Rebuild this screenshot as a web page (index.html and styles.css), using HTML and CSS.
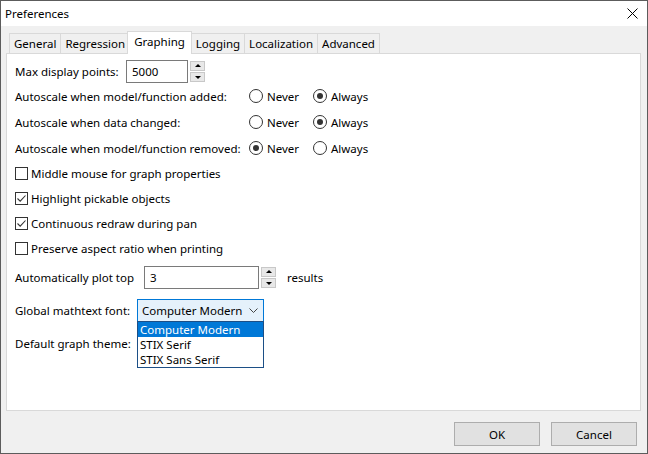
FILE: index.html
```html
<!DOCTYPE html>
<html lang="en">

<head>
    <meta charset="UTF-8">
    <title>Preferences</title>
    <link rel="stylesheet" href="styles.css">
</head>

<body>
    <div class="window">
        <div class="titlebar">
            <span>Preferences</span>
            <svg class="close" width="11" height="11" viewBox="0 0 11 11">
                <path d="M0.5 0.5 L10.5 10.5 M10.5 0.5 L0.5 10.5" stroke="#000" stroke-width="1" fill="none"/>
            </svg>
        </div>

        <div class="main">
            <div class="tabs">
                <div class="tab">General</div>
                <div class="tab">Regression</div>
                <div class="tab active">Graphing</div>
                <div class="tab">Logging</div>
                <div class="tab">Localization</div>
                <div class="tab">Advanced</div>
            </div>

            <div class="panel">
                <div class="row row-spin">
                    <span class="label label-max">Max display points:</span>
                    <div class="field field-max">5000</div>
                    <div class="arrows">
                        <span class="arrow up"></span>
                        <span class="arrow down"></span>
                    </div>
                </div>

                <div class="row row-radio">
                    <span class="label label-auto">Autoscale when model/function added:</span>
                    <span class="opt"><span class="radio"></span>Never</span>
                    <span class="opt"><span class="radio checked"></span>Always</span>
                </div>
                <div class="row row-radio">
                    <span class="label label-auto">Autoscale when data changed:</span>
                    <span class="opt"><span class="radio"></span>Never</span>
                    <span class="opt"><span class="radio checked"></span>Always</span>
                </div>
                <div class="row row-radio">
                    <span class="label label-auto">Autoscale when model/function removed:</span>
                    <span class="opt"><span class="radio checked"></span>Never</span>
                    <span class="opt"><span class="radio"></span>Always</span>
                </div>

                <div class="row row-check"><span class="check"></span>Middle mouse for graph properties</div>
                <div class="row row-check"><span class="check checked"><svg width="11" height="11" viewBox="0 0 11 11"><path d="M1.5 5.5 L4.2 8.2 L9.5 2.5" stroke="#333" stroke-width="1.1" fill="none"/></svg></span>Highlight pickable objects</div>
                <div class="row row-check"><span class="check checked"><svg width="11" height="11" viewBox="0 0 11 11"><path d="M1.5 5.5 L4.2 8.2 L9.5 2.5" stroke="#333" stroke-width="1.1" fill="none"/></svg></span>Continuous redraw during pan</div>
                <div class="row row-check"><span class="check"></span>Preserve aspect ratio when printing</div>

                <div class="row row-spin row-top">
                    <span class="label label-top">Automatically plot top</span>
                    <div class="field field-top">3</div>
                    <div class="arrows">
                        <span class="arrow up"></span>
                        <span class="arrow down"></span>
                    </div>
                    <span class="after">results</span>
                </div>

                <div class="row row-combo">
                    <span class="label label-font">Global mathtext font:</span>
                    <div class="combo">
                        <span>Computer Modern</span>
                        <svg width="9" height="5" viewBox="0 0 9 5"><path d="M0.5 0.5 L4.5 4.5 L8.5 0.5" stroke="#444" fill="none"/></svg>
                        <!-- open drop list -->
                        <div class="droplist">
                            <div class="item selected">Computer Modern</div>
                            <div class="item">STIX Serif</div>
                            <div class="item">STIX Sans Serif</div>
                        </div>
                    </div>
                </div>

                <div class="row row-theme">
                    <span class="label">Default graph theme:</span>
                </div>
            </div>

            <div class="footer">
                <button class="btn">OK</button>
                <button class="btn">Cancel</button>
            </div>
        </div>
    </div>
</body>

</html>
```

FILE: styles.css
```css
body {
    margin: 0;
    background: #fff;
}

.window {
    width: 648px;
    height: 454px;
    box-sizing: border-box;
    border: 1px solid #5c5c5c;
    display: flex;
    flex-direction: column;
    font-family: "Noto Sans", sans-serif;
    font-size: 11.5px;
    color: #000;
}

.titlebar {
    height: 25px;
    flex: none;
    background: #fff;
    display: flex;
    align-items: center;
    justify-content: space-between;
    padding: 0 9px 0 4px;
}

.main {
    flex: 1;
    background: #f0f0f0;
    display: flex;
    flex-direction: column;
    padding: 5px 6px 0 5px;
}

/* Tabs */
.tabs {
    display: flex;
    align-items: flex-end;
    height: 22px;
    margin-left: 3px;
}

.tab {
    height: 20px;
    box-sizing: border-box;
    line-height: 19px;
    padding: 0 4px;
    border: 1px solid #d9d9d9;
    border-bottom: none;
    margin-right: -1px;
    background: #f0f0f0;
}

.tab.active {
    height: 23px;
    line-height: 19px;
    margin: 0 -1px -1px -2px;
    padding: 0 6px;
    background: #fff;
    position: relative;
    z-index: 1;
}

.panel {
    height: 358px;
    box-sizing: border-box;
    border: 1px solid #d9d9d9;
    background: #fff;
    padding: 6px 8px 0;
}

/* Rows */
.row {
    display: flex;
    align-items: center;
    white-space: nowrap;
}

.row-spin {
    height: 23px;
    align-items: stretch;
}

.row-spin .label,
.row-spin .after {
    display: flex;
    align-items: center;
}

.row-radio {
    height: 26px;
}

.row-check {
    height: 25px;
}

.row-top {
    margin-top: 5px;
}

.row-combo {
    height: 23px;
    margin-top: 10px;
}

.row-theme {
    height: 22px;
    margin-top: 10px;
}

.label-max {
    width: 111px;
}

.label-auto {
    width: 234px;
}

.label-top {
    width: 129px;
}

.label-font {
    width: 122px;
}

.field {
    box-sizing: border-box;
    border: 1px solid #7a7a7a;
    padding-left: 5px;
    display: flex;
    align-items: center;
}

.field-max {
    width: 62px;
}

.field-top {
    width: 115px;
}

.arrows {
    display: flex;
    flex-direction: column;
    gap: 1px;
    margin-left: 2px;
    padding-top: 1px;
}

.arrow {
    width: 15px;
    height: 10px;
    box-sizing: border-box;
    border: 1px solid #c8c8c8;
    background: #e8e8e8;
    position: relative;
}

.arrow::after {
    content: "";
    position: absolute;
    left: 4px;
    border-left: 3px solid transparent;
    border-right: 3px solid transparent;
}

.arrow.up::after {
    top: 2px;
    border-bottom: 3px solid #000;
}

.arrow.down::after {
    top: 3px;
    border-top: 3px solid #000;
}

.after {
    margin-left: 11px;
}

/* Radios and checks */
.opt {
    width: 64px;
    display: flex;
    align-items: center;
    gap: 4px;
}

.radio {
    width: 14px;
    height: 14px;
    box-sizing: border-box;
    border: 1px solid #333;
    border-radius: 50%;
    position: relative;
}

.radio.checked::after {
    content: "";
    position: absolute;
    inset: 3px;
    border-radius: 50%;
    background: #333;
}

.check {
    width: 13px;
    height: 13px;
    box-sizing: border-box;
    border: 1px solid #333;
    margin-right: 3px;
    display: flex;
}

/* Combo box and its open list */
.combo {
    width: 127px;
    height: 23px;
    box-sizing: border-box;
    border: 1px solid #0078d7;
    background: #e5f1fb;
    display: flex;
    align-items: center;
    justify-content: space-between;
    padding: 0 5px 0 4px;
    position: relative;
}

.droplist {
    position: absolute;
    top: 100%;
    left: -1px;
    width: 127px;
    box-sizing: border-box;
    border: 1px solid #1c4f86;
    background: #fff;
    z-index: 5;
}

.droplist .item {
    height: 15px;
    line-height: 15px;
    padding-left: 2px;
    overflow: hidden;
}

.droplist .item.selected {
    background: #0078d7;
    color: #fff;
}

/* Footer buttons */
.footer {
    flex: 1;
    display: flex;
    justify-content: flex-end;
    align-items: flex-start;
    gap: 11px;
    padding: 11px 4px 0 0;
}

.btn {
    width: 86px;
    height: 24px;
    border: 1px solid #adadad;
    background: #e1e1e1;
    font: inherit;
    color: #000;
    padding: 0;
}
```
